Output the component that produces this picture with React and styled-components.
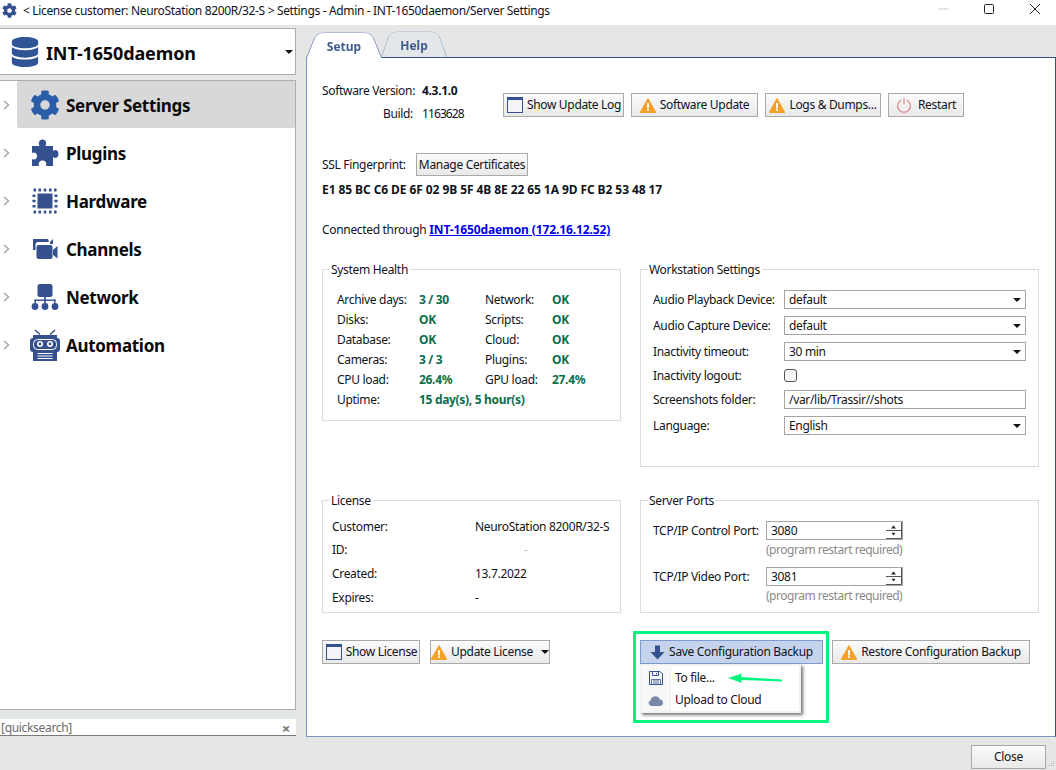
import React from "react";
import styled, { createGlobalStyle } from "styled-components";
import { FaCog, FaDatabase } from "react-icons/fa";

const FONT = `"Noto Sans", "Open Sans", sans-serif`;
const INK = "#10131a";
const NAVY = "#34508f";

const Global = createGlobalStyle`
  html, body { margin: 0; padding: 0; background: #e6e6e6; }
  body { font: 12px/16px ${FONT}; color: ${INK}; letter-spacing: -0.32px; }
  * { box-sizing: border-box; }
`;

const Win = styled.div`
  width: 1056px; height: 770px; display: flex; flex-direction: column; overflow: hidden; background: #e6e6e6; position: relative;
`;
const TitleBar = styled.header`
  height: 25px; background: #fff; display: flex; align-items: center; padding-left: 2px; margin-right: -2px; flex: none;
`;
const TitleText = styled.span`
  margin-left: 6px; flex: 1; white-space: nowrap; margin-top: -4px; letter-spacing: -0.34px;
`;
const WinControl = styled.span`
  width: 46px; height: 25px; display: flex; align-items: center; justify-content: center; margin-top: -7px;
`;
const Body = styled.div`
  flex: 1; display: flex; min-height: 0; padding-top: 3px;
`;
const Side = styled.aside`
  width: 296px; flex: none; display: flex; flex-direction: column; margin-right: 10px;
`;
const ServerBox = styled.div`
  height: 47px; background: #fff; border: 1px solid #adadad; border-left: 0; display: flex; align-items: center;
  padding-left: 10px; position: relative;
`;
const ServerName = styled.span`
  font-size: 18px; font-weight: 700; margin: 2px 0 0 6px; color: #0a0a0a; letter-spacing: -0.13px;
`;
const Caret = styled.span`
  width: 0; height: 0; border: ${(p) => p.$s || 4}px solid transparent; border-top-color: #111; border-bottom: 0;
  margin-left: auto; margin-right: ${(p) => p.$mr || 0}px; flex: none;
`;
const Tree = styled.nav`
  margin-top: 5px; height: 630px; background: #fff; border: 1px solid #adadad; border-left: 0; flex: none;
`;
const TreeRow = styled.div`
  height: 48px; display: flex; align-items: center;
`;
const Chevron = styled.span`
  width: 17px; flex: none; display: flex; padding-left: 3px;
`;
const TreeItem = styled.div`
  flex: 1; height: 47px; align-self: flex-start; display: flex; align-items: center; padding-left: 12px;
  background: ${(p) => (p.$active ? "#d8d8d8" : "transparent")};
  border-radius: 2px;
`;
const TreeIcon = styled.span`
  width: 32px; height: 32px; display: flex; align-items: center; justify-content: center; flex: none;
`;
const TreeLabel = styled.span`
  font-size: 17px; font-weight: 700; margin: 2px 0 0 5px; color: #0a0a0a; letter-spacing: -0.3px;
`;
const SearchStrip = styled.div`
  height: 9px; background: #e1e5e5; flex: none;
`;
const Search = styled.div`
  height: 17px; background: #fff; border-bottom: 1px solid #7a7a7a; display: flex; align-items: center;
  justify-content: space-between; padding: 2px 6px 0 1px; color: #6b6b6b; flex: none;
`;
const CloseX = styled.span`
  font-size: 15px; font-weight: 700; color: #777;
`;
const Right = styled.main`
  flex: 1; display: flex; flex-direction: column; min-width: 0;
`;
const Tabs = styled.div`
  height: 29px; display: flex; align-items: flex-end; flex: none; position: relative; z-index: 1;
`;
const Tab = styled.div`
  position: relative; height: 26px; width: ${(p) => p.$w}px; margin-right: ${(p) => p.$mr || 0}px; padding-top: 4px;
  display: flex; align-items: center; justify-content: center; font-weight: 700;
  color: #3f5c8c; letter-spacing: 0; z-index: ${(p) => (p.$active ? 2 : 1)};
  margin-bottom: ${(p) => (p.$active ? -1 : 0)}px;
  &::before {
    content: ""; position: absolute; inset: -11px 0 0 0; z-index: -1;
    background: ${(p) => (p.$active ? "#fff" : "#e3e7ea")};
    border: 1px solid ${(p) => (p.$active ? "#7f93bd" : "#aab6cb")};
    border-bottom: 0; border-radius: 10px 10px 0 0;
    transform: perspective(30px) rotateX(18deg); transform-origin: bottom;
  }
`;
const Panel = styled.section`
  height: 680px; background: #fff; border: 1px solid #7f93bd; border-top-color: #34508f; border-right-color: #34508f;
  padding: 22px 15px 0; flex: none; width: 750px;
`;
const TopRow = styled.div`
  display: flex; height: 44px;
`;
const VersionGrid = styled.div`
  width: 181px; display: grid; grid-template-columns: 91px 1fr; grid-auto-rows: 22.5px; align-items: center; column-gap: 9px;
`;
const RightLabel = styled.span`
  text-align: right; white-space: nowrap;
`;
const Bold = styled.span`
  font-weight: 700; white-space: nowrap;
`;
const BuildNumber = styled.span`
  letter-spacing: -0.9px;
`;
const ButtonRow = styled.div`
  display: flex; gap: 7px; margin-top: 13px; align-items: flex-start;
`;
const Btn = styled.button`
  height: ${(p) => p.$h || 24}px; width: ${(p) => p.$w}px; flex: none; padding: 0; font: inherit; letter-spacing: inherit; color: ${INK};
  border: 1px solid ${(p) => (p.$on ? "#7f9bcf" : "#a9a9a9")};
  background: ${(p) => (p.$on ? "#c5d3ec" : "linear-gradient(#fbfbfb, #e9e9e9)")};
  display: flex; align-items: center; justify-content: center; gap: ${(p) => p.$gap || 4}px; white-space: nowrap;
`;
const SslRow = styled.div`
  display: flex; align-items: center; margin-top: 29px;
`;
const SslLabel = styled.span`
  width: 94px; white-space: nowrap;
`;
const Fingerprint = styled.div`
  margin-top: 6px; font-weight: 700; height: 16px; white-space: nowrap; letter-spacing: -0.08px;
`;
const Connected = styled.div`
  margin-top: 24px; height: 16px; white-space: nowrap;
`;
const Link = styled.a`
  color: #0000ee; font-weight: 700; text-decoration: underline; margin-left: 3px; letter-spacing: -0.12px;
`;
const Groups = styled.div`
  margin-top: 31px; display: grid; grid-template-columns: 299px 399px; column-gap: 19px; row-gap: 33px;
  grid-template-rows: 198px 113px;
`;
const Group = styled.div`
  border: 1px solid #dcdcdc; height: ${(p) => (p.$h ? p.$h + "px" : "auto")};
`;
const Legend = styled.div`
  background: #fff; width: fit-content; padding: 0 2px 0 1px; margin: -8px 0 0 7px; height: 16px; white-space: nowrap;
`;
const HealthGrid = styled.div`
  display: grid; grid-template-columns: 82px 66px 67px 1fr; grid-auto-rows: 20px; align-items: center; padding: 12px 0 0 14px;
`;
const Ok = styled.span`
  color: #0b6e4a; font-weight: 700; white-space: nowrap; grid-column: ${(p) => p.$span || "auto"};
`;
const FormGrid = styled.div`
  display: grid; grid-template-columns: 131px 242px; grid-template-rows: 19px 19px 19px 15px 19px 19px; row-gap: 7px;
  align-items: center; padding: 12px 0 0 12px; white-space: nowrap;
`;
const Select = styled.div`
  height: 19px; border: 1px solid #a5a5a5; background: #fff; display: flex; align-items: center; padding: 0 4px 0 4px;
`;
const Check = styled.span`
  width: 13px; height: 13px; border: 1px solid #555; border-radius: 3px; background: #f6f6f6;
`;
const LicenseGrid = styled.div`
  display: grid; grid-template-columns: 143px 1fr; grid-auto-rows: 23.6px; align-items: center; padding: 6px 0 0 9px; white-space: nowrap;
`;
const Faint = styled.span`
  color: #bbb; padding-left: ${(p) => p.$indent || 0}px;
`;
const PortGrid = styled.div`
  display: grid; grid-template-columns: 113px 137px; align-items: center; padding: 12px 0 0 12px; white-space: nowrap;
`;
const Spin = styled.div`
  height: 19px; border: 1px solid #a5a5a5; background: #fff; display: flex; align-items: center; justify-content: space-between; padding-left: 4px;
`;
const Spinner = styled.span`
  width: 17px; height: 17px; display: flex; flex: none;
`;
const Hint = styled.span`
  grid-column: 2; color: #8a8a8a; height: 27px; padding-top: 2px; letter-spacing: -0.48px;
`;
const BottomRow = styled.div`
  margin-top: 27px; display: flex;
`;
const BottomLeft = styled.div`
  width: 318px; display: flex; gap: 10px; flex: none;
`;
const BottomRight = styled.div`
  display: flex; gap: 9px;
`;
const Backup = styled.div`
  position: relative;
`;
const Highlight = styled.div`
  position: absolute; left: -7px; top: -9px; width: 196px; height: 92px; border: 3px solid #00f57f; border-radius: 1px; z-index: 3; pointer-events: none;
`;
const Menu = styled.div`
  position: absolute; left: 0; top: 24px; width: 161px; height: 49px; background: #fff; border: 2px solid #f2f2f2;
  box-shadow: 2px 2px 3px rgba(0,0,0,.55); z-index: 2; display: flex; flex-direction: column; padding-top: 1px;
`;
const MenuItem = styled.div`
  height: 23px; display: flex; align-items: center; color: #1a1010;
`;
const MenuIcon = styled.span`
  width: 29px; height: 100%; display: flex; align-items: center; justify-content: center; background: #f8f8f8; border-right: 1px solid #f0f0f0; margin-right: 4px; flex: none;
`;
const Arrow = styled.svg`
  position: absolute; left: 88px; top: 33px; z-index: 4;
`;
const Footer = styled.footer`
  flex: 1; display: flex; justify-content: flex-end; padding: 8px 10px 0 0;
`;
const Grip = styled.svg`
  position: absolute; right: 1px; bottom: 3px;
`;

const WarnIcon = () => (
  <svg width="16" height="15" viewBox="0 0 16 15">
    <path d="M8 .5 L15.8 14.5 H.2 Z" fill="#f5a028" stroke="#f5a028" strokeLinejoin="round" />
    <rect x="7.1" y="5" width="1.8" height="5.5" fill="#fff" />
    <rect x="7.1" y="11.2" width="1.8" height="1.8" fill="#fff" />
  </svg>
);
const WindowIcon = () => (
  <svg width="18" height="18" viewBox="0 0 18 18" style={{ marginRight: -1 }}>
    <rect x="1.5" y="1.5" width="15" height="15" fill="#f2f4f8" stroke="#34508f" />
    <rect x="1" y="1" width="16" height="3" fill="#34508f" />
  </svg>
);
const PowerIcon = () => (
  <svg width="16" height="16" viewBox="0 0 15 15" fill="none" stroke="#d97a7a" strokeWidth="1">
    <path d="M4.8 3 A6 6 0 1 0 10.2 3" />
    <path d="M7.5 1 V7" />
  </svg>
);
const ChevronIcon = () => (
  <svg width="7" height="10" viewBox="0 0 7 10" fill="none" stroke="#aaa" strokeWidth="1.6"><path d="M1 1 L5.5 5 L1 9" /></svg>
);
const PuzzleIcon = () => (
  <svg width="28" height="28" viewBox="0 0 28 28" fill={NAVY}>
    <path d="M1 7 H8.5 C7 4 8 .5 11.5 .5 C15 .5 16 4 14.5 7 H22 V12 C24.5 10 27.5 11.5 27.5 15 C27.5 18.5 24.5 20 22 18 V27 H15 C16 24 14.5 21.5 11.5 21.5 C8.5 21.5 7 24 8 27 H1 V20 C3.5 21.5 6 20 6 17 C6 14 3.5 12.5 1 14 Z" />
  </svg>
);
const ChipIcon = () => (
  <svg width="26" height="26" viewBox="0 0 26 26" fill={NAVY}>
    <rect x="5.5" y="5.5" width="15" height="15" />
    {[1.5, 6.5, 11.7, 17, 22].map((x) => (
      <React.Fragment key={x}>
        <rect x={x} y="0.5" width="2.6" height="3" rx=".6" />
        <rect x={x} y="22.5" width="2.6" height="3" rx=".6" />
      </React.Fragment>
    ))}
    {[6.5, 11.7, 17].map((y) => (
      <React.Fragment key={y}>
        <rect x="0.5" y={y} width="3" height="2.6" rx=".6" />
        <rect x="22.5" y={y} width="3" height="2.6" rx=".6" />
      </React.Fragment>
    ))}
  </svg>
);
const CameraIcon = () => (
  <svg width="26" height="22" viewBox="0 0 26 22" fill={NAVY}>
    <path d="M1 1 H16 L17 4 H6 Q3.5 4 3.5 6.5 V12 H1 Z" />
    <path d="M18 4 L21 1 V6 H18 Z" />
    <rect x="4.5" y="7" width="16" height="14" rx="2" />
    <path d="M21 12 L25.5 8 V20.5 L21 17 Z" />
  </svg>
);
const NetworkIcon = () => (
  <svg width="28" height="26" viewBox="0 0 28 26" fill={NAVY}>
    <rect x="6.5" y="0" width="15" height="13" rx="2.5" />
    <rect x="13.2" y="11" width="1.6" height="5" />
    <rect x="3.5" y="15.5" width="21" height="1.4" />
    <rect x="3.5" y="15.5" width="1.4" height="4" />
    <rect x="23.1" y="15.5" width="1.4" height="4" />
    <rect x="13.2" y="15.5" width="1.6" height="4" />
    <circle cx="4" cy="22.5" r="3.4" />
    <circle cx="14" cy="22.5" r="3.4" />
    <circle cx="24" cy="22.5" r="3.4" />
  </svg>
);
const RobotIcon = () => (
  <svg width="30" height="32" viewBox="0 0 30 32" fill={NAVY}>
    <path d="M5 1 L10 5.5 M25 1 L20 5.5" stroke={NAVY} strokeWidth="1.5" />
    <rect x="3" y="6" width="24" height="26" />
    <rect x="0" y="9" width="30" height="14" rx="3" />
    <rect x="3.5" y="10.5" width="23" height="10" rx="4" fill="none" stroke="#fff" strokeWidth="1" />
    <circle cx="10" cy="15" r="3" fill="#fff" />
    <circle cx="20" cy="15" r="3" fill="#fff" />
    <circle cx="10" cy="15" r="1.4" fill={NAVY} />
    <circle cx="20" cy="15" r="1.4" fill={NAVY} />
    {[24, 26.5, 29].map((y) => (
      <rect key={y} x="7.5" y={y} width="15" height="1" fill="#fff" />
    ))}
  </svg>
);
const SpinIcon = () => (
  <svg width="17" height="17" viewBox="0 0 17 17">
    <path d="M8.5 3.5 L11 6.5 H6 Z" fill="#222" />
    <path d="M1 8.5 H16" stroke="#555" />
    <path d="M6.5 10.8 H10.5 L8.5 13.5 Z" fill="#222" />
    <path d="M1 16.5 H16.5 V0" stroke="#555" fill="none" />
  </svg>
);
const DownIcon = () => (
  <svg width="15" height="15" viewBox="0 0 15 15" fill={NAVY}>
    <path d="M5 .5 H10 V7 H14.5 L7.5 14.5 L.5 7 H5 Z" />
  </svg>
);
const SaveIcon = () => (
  <svg width="16" height="16" viewBox="0 0 16 16" fill="none" stroke="#34508f">
    <path d="M1.5 1.5 H12 L14.5 4 V14.5 H1.5 Z" />
    <path d="M4.5 1.5 V5.5 H10.5 V1.5 M8.5 2.8 V4.3" />
    <path d="M3.5 14.5 V9.5 H12.5 V14.5 M5 11 H11 M5 13 H11" strokeWidth=".8" />
  </svg>
);
const CloudIcon = () => (
  <svg width="16" height="11" viewBox="0 0 16 11" fill="#7b89a8">
    <path d="M3.2 11 A3 3 0 0 1 2.6 5.2 A5 5 0 0 1 12 4.2 A3.5 3.5 0 0 1 12.6 11 Z" />
  </svg>
);

const nav = [
  ["Server Settings", <FaCog size={30} color="#2a5ca8" />, true],
  ["Plugins", <PuzzleIcon />],
  ["Hardware", <ChipIcon />],
  ["Channels", <CameraIcon />],
  ["Network", <NetworkIcon />],
  ["Automation", <RobotIcon />],
];
const health = [
  ["Archive days:", "3 / 30", "Network:", "OK"],
  ["Disks:", "OK", "Scripts:", "OK"],
  ["Database:", "OK", "Cloud:", "OK"],
  ["Cameras:", "3 / 3", "Plugins:", "OK"],
  ["CPU load:", "26.4%", "GPU load:", "27.4%"],
];

export default function App() {
  return (
    <Win>
      <Global />
      <TitleBar>
        <FaCog size={15} color="#34508f" style={{ marginTop: -4 }} />
        <TitleText>&lt; License customer: NeuroStation 8200R/32-S &gt; Settings - Admin - INT-1650daemon/Server Settings</TitleText>
        <WinControl>
          <svg width="12" height="2"><path d="M1 1 H11" stroke="#ccc" /></svg>
        </WinControl>
        <WinControl>
          <svg width="12" height="12"><rect x="1.5" y="1.5" width="9" height="9" rx="1" fill="none" stroke="#222" /></svg>
        </WinControl>
        <WinControl>
          <svg width="12" height="12"><path d="M1 1 L11 11 M11 1 L1 11" stroke="#222" /></svg>
        </WinControl>
      </TitleBar>
      <Body>
        <Side>
          <ServerBox>
            <FaDatabase size={30} color="#2f5597" />
            <ServerName>INT-1650daemon</ServerName>
            <Caret $mr={2} />
          </ServerBox>
          <Tree>
            {nav.map(([label, icon, active]) => (
              <TreeRow key={label}>
                <Chevron><ChevronIcon /></Chevron>
                <TreeItem $active={active}>
                  <TreeIcon>{icon}</TreeIcon>
                  <TreeLabel>{label}</TreeLabel>
                </TreeItem>
              </TreeRow>
            ))}
          </Tree>
          <SearchStrip />
          <Search>
            <span>[quicksearch]</span>
            <CloseX>×</CloseX>
          </Search>
        </Side>
        <Right>
          <Tabs>
            <Tab $active $w={76} $mr={-1}>Setup</Tab>
            <Tab $w={66}>Help</Tab>
          </Tabs>
          <Panel>
            <TopRow>
              <VersionGrid>
                <RightLabel>Software Version:</RightLabel>
                <Bold>4.3.1.0</Bold>
                <RightLabel>Build:</RightLabel>
                <BuildNumber>1163628</BuildNumber>
              </VersionGrid>
              <ButtonRow>
                <Btn $w={121}><WindowIcon />Show Update Log</Btn>
                <Btn $w={127}><WarnIcon />Software Update</Btn>
                <Btn $w={116}><WarnIcon />Logs &amp; Dumps...</Btn>
                <Btn $w={76} $gap={6}><PowerIcon />Restart</Btn>
              </ButtonRow>
            </TopRow>
            <SslRow>
              <SslLabel>SSL Fingerprint:</SslLabel>
              <Btn $w={112} $h={23}>Manage Certificates</Btn>
            </SslRow>
            <Fingerprint>E1 85 BC C6 DE 6F 02 9B 5F 4B 8E 22 65 1A 9D FC B2 53 48 17</Fingerprint>
            <Connected>Connected through<Link>INT-1650daemon (172.16.12.52)</Link></Connected>
            <Groups>
              <Group $h={152}>
                <Legend>System Health</Legend>
                <HealthGrid>
                  {health.map((r) => (
                    <React.Fragment key={r[0]}>
                      <span>{r[0]}</span><Ok>{r[1]}</Ok><span>{r[2]}</span><Ok>{r[3]}</Ok>
                    </React.Fragment>
                  ))}
                  <span>Uptime:</span>
                  <Ok $span="span 3">15 day(s), 5 hour(s)</Ok>
                </HealthGrid>
              </Group>
              <Group>
                <Legend>Workstation Settings</Legend>
                <FormGrid>
                  <span>Audio Playback Device:</span>
                  <Select>default<Caret /></Select>
                  <span>Audio Capture Device:</span>
                  <Select>default<Caret /></Select>
                  <span>Inactivity timeout:</span>
                  <Select>30 min<Caret /></Select>
                  <span>Inactivity logout:</span>
                  <Check />
                  <span>Screenshots folder:</span>
                  <Select>/var/lib/Trassir//shots</Select>
                  <span>Language:</span>
                  <Select>English<Caret /></Select>
                </FormGrid>
              </Group>
              <Group>
                <Legend>License</Legend>
                <LicenseGrid>
                  <span>Customer:</span><span>NeuroStation 8200R/32-S</span>
                  <span>ID:</span><Faint $indent={49}>-</Faint>
                  <span>Created:</span><span>13.7.2022</span>
                  <span>Expires:</span><span>-</span>
                </LicenseGrid>
              </Group>
              <Group>
                <Legend>Server Ports</Legend>
                <PortGrid>
                  <span>TCP/IP Control Port:</span>
                  <Spin>3080<Spinner><SpinIcon /></Spinner></Spin>
                  <Hint>(program restart required)</Hint>
                  <span>TCP/IP Video Port:</span>
                  <Spin>3081<Spinner><SpinIcon /></Spinner></Spin>
                  <Hint>(program restart required)</Hint>
                </PortGrid>
              </Group>
            </Groups>
            <BottomRow>
              <BottomLeft>
                <Btn $w={98}><WindowIcon />Show License</Btn>
                <Btn $w={120}><WarnIcon />Update License<Caret style={{ margin: "0 0 0 4px" }} /></Btn>
              </BottomLeft>
              <BottomRight>
                <Backup>
                  <Btn $w={183} $on><DownIcon />Save Configuration Backup</Btn>
                  <Menu>
                    <MenuItem><MenuIcon><SaveIcon /></MenuIcon>To file...</MenuItem>
                    <MenuItem><MenuIcon><CloudIcon /></MenuIcon>Upload to Cloud</MenuItem>
                  </Menu>
                  <Arrow width="56" height="12" viewBox="0 0 56 12">
                    <path d="M0 5 L14 .5 L13 4 L54 6.5 L54 8.5 L13 7 L14 10 Z" fill="#00f57f" />
                  </Arrow>
                  <Highlight />
                </Backup>
                <Btn $w={198}><WarnIcon />Restore Configuration Backup</Btn>
              </BottomRight>
            </BottomRow>
          </Panel>
          <Footer>
            <Btn $w={75} $h={24}>Close</Btn>
          </Footer>
        </Right>
      </Body>
      <Grip width="6" height="6" viewBox="0 0 6 6" fill="#b5b5b5">
        <rect x="4" y="0" width="1" height="1" />
        <rect x="2" y="2" width="1" height="1" />
        <rect x="4" y="2" width="1" height="1" />
        <rect x="0" y="4" width="1" height="1" />
        <rect x="2" y="4" width="1" height="1" />
        <rect x="4" y="4" width="1" height="1" />
      </Grip>
    </Win>
  );
}
